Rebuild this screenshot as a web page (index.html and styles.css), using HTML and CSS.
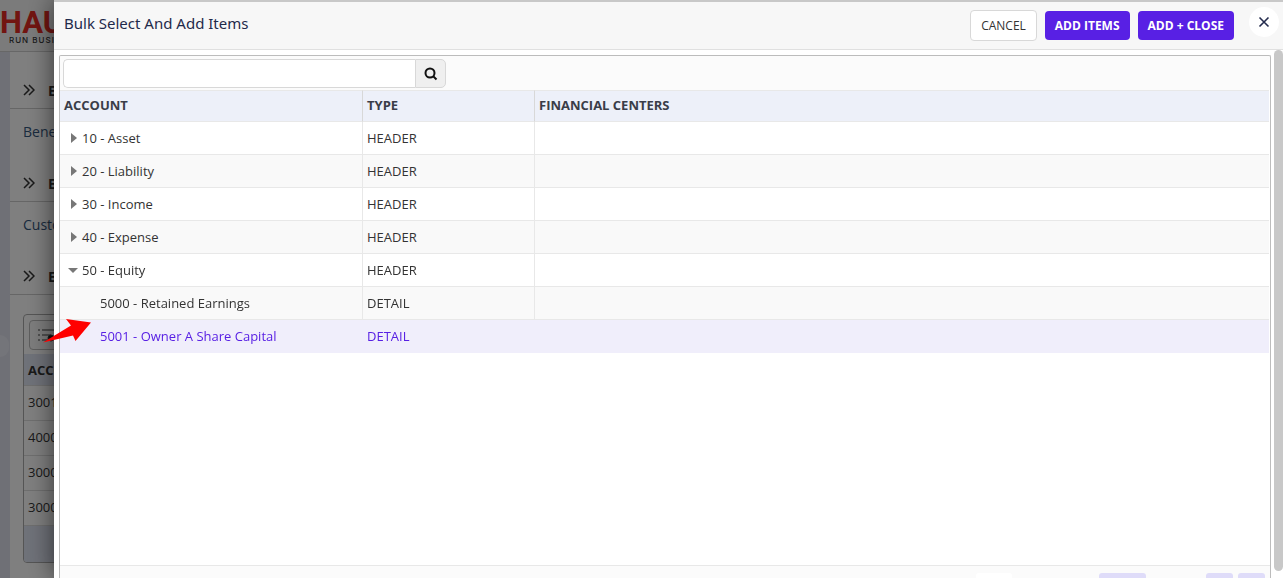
FILE: index.html
```html
<!DOCTYPE html>
<html lang="en">
<head>
<meta charset="utf-8">
<title>Bulk Select And Add Items</title>
<link rel="stylesheet" href="styles.css">
</head>
<body>
<div class="page">
  <header class="page-header">
    <div class="brand">
      <div class="brand-name">HAU</div>
      <div class="brand-tag">RUN BUSI</div>
    </div>
  </header>
  <div class="page-body">
    <nav class="rail"><span class="rail-knob"></span></nav>
    <main class="content">
      <h2 class="section-title first"><svg class="chevrons" viewBox="0 0 12 12"><path d="M1 1l5 5-5 5M6 1l5 5-5 5"/></svg>E</h2>
      <p class="field-label">Bene</p>
      <h2 class="section-title"><svg class="chevrons" viewBox="0 0 12 12"><path d="M1 1l5 5-5 5M6 1l5 5-5 5"/></svg>E</h2>
      <p class="field-label">Custo</p>
      <h2 class="section-title"><svg class="chevrons" viewBox="0 0 12 12"><path d="M1 1l5 5-5 5M6 1l5 5-5 5"/></svg>E</h2>
      <div class="lines">
        <div class="lines-bar">
          <button class="lines-button" type="button" aria-label="Bulk select">
            <svg class="list-icon" viewBox="0 0 18 14"><path d="M0 2h2M4 2h12M0 7h2M4 7h9M0 12h2M4 12h6"/><circle cx="13" cy="10" r="3"/></svg>
          </button>
        </div>
        <table class="lines-table">
          <thead><tr><th>ACCO</th></tr></thead>
          <tbody>
            <tr><td>3001</td></tr>
            <tr><td>4000</td></tr>
            <tr><td>3000</td></tr>
            <tr><td>3000</td></tr>
          </tbody>
        </table>
        <div class="lines-foot"></div>
      </div>
    </main>
  </div>
</div>
<div class="overlay"></div>

<section class="modal" role="dialog" aria-labelledby="modal-title">
  <header class="modal-header">
    <h1 class="modal-title" id="modal-title">Bulk Select And Add Items</h1>
    <div class="actions">
      <button class="btn" type="button">CANCEL</button>
      <button class="btn primary" type="button">ADD ITEMS</button>
      <button class="btn primary" type="button">ADD + CLOSE</button>
    </div>
    <button class="close" type="button" aria-label="Close">
      <svg class="close-icon" viewBox="0 0 12 12"><path d="M1.5 1.5l9 9M10.5 1.5l-9 9"/></svg>
    </button>
  </header>
  <div class="modal-body">
    <div class="grid">
      <form class="search">
        <input class="search-input" type="text" aria-label="Search accounts">
        <button class="search-button" type="button" aria-label="Search">
          <svg class="search-icon" viewBox="0 0 14 14"><circle cx="6" cy="6" r="4.5"/><path d="M9.5 9.5l3 3"/></svg>
        </button>
      </form>
      <div class="grid-scroll">
        <table class="accounts">
          <colgroup><col class="col-account"><col class="col-type"><col></colgroup>
          <thead>
            <tr><th>ACCOUNT</th><th>TYPE</th><th>FINANCIAL CENTERS</th></tr>
          </thead>
          <tbody>
            <tr><td><span class="node"><svg class="caret" viewBox="0 0 10 10"><path d="M3 0l6 5-6 5z"/></svg>10 - Asset</span></td><td>HEADER</td><td></td></tr>
            <tr><td><span class="node"><svg class="caret" viewBox="0 0 10 10"><path d="M3 0l6 5-6 5z"/></svg>20 - Liability</span></td><td>HEADER</td><td></td></tr>
            <tr><td><span class="node"><svg class="caret" viewBox="0 0 10 10"><path d="M3 0l6 5-6 5z"/></svg>30 - Income</span></td><td>HEADER</td><td></td></tr>
            <tr><td><span class="node"><svg class="caret" viewBox="0 0 10 10"><path d="M3 0l6 5-6 5z"/></svg>40 - Expense</span></td><td>HEADER</td><td></td></tr>
            <tr><td><span class="node"><svg class="caret" viewBox="0 0 10 10"><path d="M0 3h10l-5 5z"/></svg>50 - Equity</span></td><td>HEADER</td><td></td></tr>
            <tr><td><span class="node child">5000 - Retained Earnings</span></td><td>DETAIL</td><td></td></tr>
            <tr class="selected"><td><span class="node child">5001 - Owner A Share Capital</span></td><td>DETAIL</td><td></td></tr>
          </tbody>
        </table>
      </div>
      <footer class="pager">
        <span class="page-size"></span>
        <span class="page-current"></span>
        <span class="page-step"></span>
        <span class="page-step"></span>
      </footer>
    </div>
    <div class="scrollbar"><div class="thumb"></div></div>
  </div>
</section>

<svg class="pointer" viewBox="0 0 50 26"><path d="M1 24.500L29 7.500 24 1l25 3.500L33.500 23l-2.500-5.500z"/></svg>
</body>
</html>
```

FILE: styles.css
```css
* { box-sizing: border-box; }

body {
  margin: 0;
  height: 100vh;
  overflow: hidden;
  font-family: "Open Sans", "Noto Sans", sans-serif;
  font-size: 13px;
  color: #333;
}

h1, h2, p { margin: 0; }
button, input { font: inherit; }
svg { display: block; flex: none; }

/* Page behind the dialog */
.page {
  display: flex;
  flex-direction: column;
  height: 100vh;
  overflow: hidden;
  background: #fff;
}
.page-header {
  flex: none;
  height: 52px;
  padding-top: 9px;
  background: #f7f7f7;
  border-bottom: 1px solid #cfcfcf;
}
.brand-name {
  font: 700 31px/28px Roboto, sans-serif;
  color: #e42a22;
}
.brand-tag {
  padding-left: 9px;
  font: 500 8px/6px Inter, sans-serif;
  letter-spacing: 1px;
  color: #333;
}
.page-body { display: flex; flex: 1; min-height: 0; }
.rail {
  display: flex;
  align-items: center;
  flex: none;
  width: 10px;
  background: #dfe1ec;
}
.rail-knob {
  width: 9px;
  height: 22px;
  margin-bottom: -62px;
  border-radius: 0 11px 11px 0;
  background: #e9eaf4;
}
.content { flex: 1; min-width: 0; }
.section-title {
  display: flex;
  align-items: center;
  gap: 13px;
  height: 45px;
  padding-left: 13px;
  padding-top: 8px;
  border-bottom: 1px solid #ccc;
  font-size: 14px;
  font-weight: 700;
  color: #333;
}
.section-title.first { height: 57px; padding-top: 20px; }
.chevrons { width: 12px; height: 12px; fill: none; stroke: #333; stroke-width: 1.5; }
.field-label {
  height: 48px;
  padding-left: 13px;
  font-size: 14px;
  line-height: 46px;
  color: #34567c;
}
.lines {
  margin: 19px 20px 0 13px;
  border: 1px solid #aaa;
  border-radius: 4px;
  overflow: hidden;
}
.lines-bar { padding: 5px; height: 39px; }
.lines-button {
  display: flex;
  align-items: center;
  width: 40px;
  height: 30px;
  padding: 0 8px;
  border: 1px solid #bbb;
  border-radius: 4px;
  background: #fafafa;
}
.list-icon { width: 18px; height: 14px; stroke: #444; stroke-width: 1; fill: #222; }
.lines-table { width: 100%; border-collapse: separate; border-spacing: 0; }
.lines-table th, .lines-table td {
  height: 35px;
  padding: 0 4px 2px;
  border-bottom: 1px solid #ddd;
  text-align: left;
}
.lines-table th { height: 32px; padding-bottom: 0; background: #dfe4f2; }
.lines-foot { height: 36px; background: #dfe4f2; }

.overlay { position: fixed; inset: 0; background: rgba(0, 0, 0, 0.5); }

/* Dialog */
.modal {
  position: fixed;
  inset: 0 0 0 54px;
  display: flex;
  flex-direction: column;
  background: #fff;
  border-top: 2px solid #c8c8c8;
  box-shadow: 0 0 24px rgba(0, 0, 0, 0.6);
}
.modal-header {
  display: flex;
  align-items: center;
  flex: none;
  height: 48px;
  padding: 0 4px 0 10px;
  background: #f7f7f7;
  border-bottom: 1px solid #e0e0e0;
}
.modal-title {
  flex: 1;
  padding-bottom: 6px;
  font: 400 15px/20px "Noto Sans", sans-serif;
  color: #1f2a4b;
}
.actions { display: flex; align-items: center; gap: 8px; }
.btn {
  height: 31px;
  padding: 0 10px;
  border: 1px solid #d8d8d8;
  border-radius: 4px;
  background: #fff;
  font-size: 12px;
  color: #333;
}
.btn.primary {
  height: 29px;
  border: 0;
  background: #5820e4;
  font-weight: 700;
  color: #fff;
}
.close {
  display: grid;
  place-items: center;
  width: 30px;
  height: 30px;
  margin: 0 0 8px 15px;
  padding: 0;
  border: 0;
  border-radius: 50%;
  background: #fff;
}
.close-icon { width: 12px; height: 12px; fill: none; stroke: #252c4e; stroke-width: 1.6; }

.modal-body {
  display: flex;
  flex: 1;
  gap: 3px;
  min-height: 0;
  padding-left: 5px;
}
.grid {
  display: flex;
  flex-direction: column;
  flex: 1;
  margin-top: 5px;
  border: 1px solid #bcbcbc;
  border-bottom: 0;
  border-radius: 2px 2px 0 0;
  background: #fbfbfb;
}
.search { display: flex; flex: none; height: 34px; padding: 3px 3px 2px; }
.search-input {
  width: 352px;
  padding: 0 8px;
  border: 1px solid #d8d8d8;
  border-right: 0;
  border-radius: 5px 0 0 5px;
  background: #fff;
}
.search-button {
  display: grid;
  place-items: center;
  width: 31px;
  padding: 0;
  border: 1px solid #d8d8d8;
  border-radius: 0 5px 5px 0;
  background: #efefef;
}
.search-icon { width: 14px; height: 14px; fill: none; stroke: #111; stroke-width: 2; }
.grid-scroll { flex: 1; min-height: 0; padding-right: 1px; background: #fff; }

.accounts {
  width: 100%;
  table-layout: fixed;
  border-collapse: separate;
  border-spacing: 0;
}
.col-account { width: 303px; }
.col-type { width: 172px; }
.accounts th, .accounts td {
  height: 33px;
  padding: 0 4px;
  border-right: 1px solid #e8e8e8;
  border-bottom: 1px solid #e8e8e8;
  text-align: left;
}
.accounts th {
  height: 32px;
  padding-bottom: 2px;
  background: #edf0f9;
  border-right-color: #d8d8d8;
  border-top: 1px solid #e8e8e8;
  font-size: 13px;
  font-weight: 700;
  color: #3a3d48;
}
.accounts th:last-child, .accounts td:last-child { border-right: 0; }
.accounts tbody tr:nth-child(even) { background: #f9f9f9; }
.accounts tbody .selected { background: #f0eefb; color: #5820e4; }
.accounts .selected td { border-color: #f0eefb; }
.node { display: flex; align-items: center; gap: 4px; padding-left: 4px; }
.node.child { padding-left: 36px; }
.caret { width: 10px; height: 10px; fill: #777; }

.pager {
  display: flex;
  justify-content: flex-end;
  flex: none;
  height: 13px;
  padding: 7px 5px 0 0;
  border-top: 1px solid #e8e8e8;
  background: #fbfbfb;
}
.pager span { border-radius: 3px 3px 0 0; background: #dfdcf9; }
.pager .page-size { width: 36px; margin-right: 87px; background: #fff; }
.pager .page-current { width: 47px; margin-right: 60px; }
.pager .page-step { width: 27px; }
.pager .page-step + .page-step { margin-left: 5px; }

.scrollbar { flex: none; width: 9px; padding-bottom: 7px; }
.thumb { height: 100%; border-radius: 5px; background: #c8c8c8; }

/* Arrow laid over the dialog edge */
.pointer {
  position: fixed;
  left: 42px;
  top: 318px;
  width: 50px;
  height: 26px;
  fill: #f00;
}
```
